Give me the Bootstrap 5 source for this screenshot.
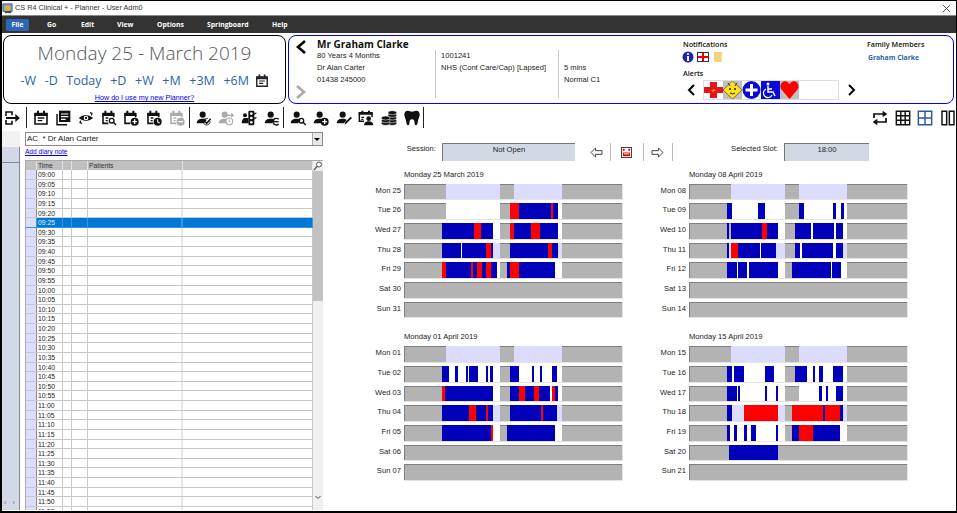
<!DOCTYPE html>
<html lang="en">
<head>
  <meta charset="UTF-8" />
  <title>CS R4 Clinical + - Planner - User Adm0</title>
  <link href="https://cdn.jsdelivr.net/npm/bootstrap@5.3.3/dist/css/bootstrap.min.css" rel="stylesheet">
  <style>
    html, body { height: 100%; overflow: hidden; background: #fff; }
    body { font-family: "Liberation Sans", "Noto Sans", sans-serif; font-size: 7.6px; line-height: 12px; color: #222; }
    .app-window { width: 957px; height: 513px; border: 1px solid #000; border-left-width: 2px; border-bottom-width: 2px; overflow: hidden; }
    .title-bar { height: 14px; font-size: 7.3px; color: #333; }
    .title-bar svg { width: 11px; height: 11px; margin: 0 2px 0 0; }
    .menu-bar { height: 18px; background: #333; border-top: 1px solid #888; color: #fff; font-family: "Open Sans", sans-serif; font-weight: 700; font-size: 6.8px; padding-left: 4px; }
    .menu-bar span { display: block; }
    .menu-file { width: 23px; height: 12px; line-height: 12px; background: #2f65b5; border-radius: 2px; text-align: center; margin-right: 18px; }
    .menu-bar .m-go { width: 34px; } .menu-bar .m-edit { width: 36px; } .menu-bar .m-view { width: 40px; }
    .menu-bar .m-options { width: 50px; } .menu-bar .m-spring { width: 65px; }
    .panels { height: 69px; margin: 2px 0 0 1px; gap: 2px; }
    .date-panel { width: 283px; border: 1px solid #000; border-radius: 8px; }
    .date-title { font-family: "Open Sans", sans-serif; font-weight: 300; font-size: 19px; line-height: 26px; color: #555; margin-top: 4px; }
    .date-nav { gap: 8.6px; margin-top: 5px; height: 20px; font-family: "Open Sans", sans-serif; font-size: 12.5px; line-height: 20px; color: #2d62ad; }
    .date-nav svg { width: 14px; height: 14px; margin-left: -3px; }
    .date-help { font-size: 7.2px; line-height: 11px; color: #0000e0; text-decoration: underline; margin-top: 1px; }
    .patient-panel { width: 666px; border: 1px solid #00f; border-radius: 8px; }
    .chev-col { width: 28px; padding: 3px 0 3px 5px; }
    .chev-col svg { width: 14px; height: 16px; }
    .p-main { width: 118px; padding-top: 2px; }
    .p-name { font-family: "Open Sans", sans-serif; font-size: 10px; line-height: 12px; font-weight: 700; color: #111; }
    .p-line { height: 12px; white-space: nowrap; }
    .p-col { margin-top: 14px; height: 48px; border-left: 1px solid #ccc; padding: 0 0 0 5px; }
    .p-col.c2 { width: 123px; } .p-col.c3 { width: 125px; }
    .p-head { font-family: "Open Sans", sans-serif; font-weight: 600; color: #111; font-size: 7.2px; }
    .notify { width: 184px; padding-top: 2px; }
    .notify-icons { gap: 3px; height: 13px; margin-left: -1px; }
    .notify-icons svg { width: 12px; height: 12px; }
    .alert-row { margin: 1px 0 0 3px; }
    .alert-row > svg { width: 10px; height: 14px; }
    .alert-box { width: 136px; height: 20px; border: 1px solid #ddd; margin: 0 8px 0 7px; padding: 0; }
    .alert-box svg { width: 19px; height: 18px; display: block; }
    .family { padding-top: 2px; }
    .family-link { color: #2d62ad; font-weight: 700; font-family: "Open Sans", sans-serif; font-size: 6.8px; margin: 2px 0 0 1px; }
    .toolbar { height: 27px; padding: 2px 0 2px 1px; }
    .tool { width: 16px; height: 16px; margin: 0 5.7px 0 1px; color: #111; flex: none; }
    .tool.off { color: #aaa; }
    .tool.on { color: #2d5a9a; }
    .tool-sep { width: 1px; height: 21px; background: #222; margin: 0 5px 0 -2px; flex: none; }
    .tool-sep.first { margin-left: 0; }
    .work { height: 379px; }
    .side-strip { width: 18px; background: #f2f2f2; }
    .side-strip .fill { background: #d3d9e4; margin-top: 16px; border-right: 1px solid #7f8a99; }
    .side-strip .fill-line { height: 16px; border-bottom: 1px solid #7f8a99; }
    .side-arrows { color: #666; font-size: 7px; line-height: 9px; padding: 0 4px 3px 2px; }
    .diary { width: 298px; margin-left: 5px; padding-top: 1px; }
    .combo { height: 14px; border: 1px solid #8a8a8a; font-size: 8px; line-height: 12px; padding-left: 1px; }
    .combo-btn { width: 10px; background: #e8e8e8; border-left: 1px solid #aaa; }
    .combo-btn::after { content: ""; border: 3px solid transparent; border-top-color: #000; border-bottom: 0; }
    .add-note { height: 14px; color: #0000e0; text-decoration: underline; font-size: 6.6px; line-height: 12px; }
    .slots { height: 350px; border: 1px solid #aaa; border-width: 1px 0 0 1px; overflow: hidden; }
    .slot-list { width: 287px; }
    .slot-row { display: grid; grid-template-columns: 11px 26px 9px 16px 95px 1fr; height: 9.63px; font-size: 6.8px; line-height: 9px; box-sizing: border-box; border-bottom: 1px solid #c8c8c8; }
    .slot-row > div { border-right: 1px solid #c8c8c8; padding-left: 1px; overflow: hidden; }
    .slot-row > div:first-child { background: #dcdcff; border-right-color: #888; }
    .slot-row > div:nth-child(5) { border-right: 2px solid #e8e8e8; }
    .slot-row.head { background: #c0c0c0; border-bottom: 0; color: #333; height: 9px; }
    .slot-row.head > div, .slot-row.head > div:first-child { background: #c0c0c0; border-right: 1px solid #e4e4e4; }
    .slot-row.sel, .slot-row.sel > div { background: #0078d7; color: #e8f2ff; border-color: #3c94de; }
    .slot-row.sel > div:first-child { background: #dcdcff; color: inherit; }
    .slot-scroll { width: 10px; background: #f0f0f0; }
    .slot-scroll .thumb { height: 130px; background: #c2c2c2; }
    .slot-scroll svg { width: 10px; height: 10px; }
    .planner { width: 620px; margin-left: 15px; }
    .session-row { height: 18px; margin-top: 12px; }
    .field-label { width: 104px; padding-right: 6px; text-align: right; height: 18px; line-height: 12px; }
    .field-label.slot { width: 111px; }
    .field-box { background: #d3d9e4; border-top: 1px solid #777; border-left: 1px solid #777; text-align: center; line-height: 11px; height: 18px; width: 133px; }
    .field-box.slot { width: 85px; }
    .nav-btn { height: 18px; border-right: 1px solid #bbb; width: 29px; }
    .nav-btn.back { width: 27px; margin-left: 9px; } .nav-btn.today { width: 33px; }
    .nav-btn svg { width: 13px; height: 11px; }
    .month-grid { display: grid; grid-template-columns: 285px 285px; row-gap: 11px; margin-top: 8.7px; }
    .month-title { height: 14px; padding-left: 66px; line-height: 10px; }
    .day-row { height: 19.67px; padding-bottom: 3px; }
    .day-label { width: 63px; margin-right: 3px; text-align: right; line-height: 14px; flex: none; }
    .day-bar { width: 219px; height: 16.67px; background: #b3b3b3; border: 1px solid #e4e4e4; border-width: 0 1px 1px 0; box-shadow: inset 1px 1px 0 #808080; overflow: hidden; flex: none; }
    .day-bar > i { display: block; height: 100%; flex: none; }
    .seg-g { background: transparent; } .seg-l { background: #dcdcff; } .seg-w { background: #fff; }
    .seg-b { background: #0000bb; } .seg-r { background: #f00; }
  </style>
</head>
<body>
  <svg width="0" height="0" class="position-absolute">
    <defs>
      <symbol id="cal" viewBox="0 0 24 24"><path d="M3 6h18v15H3z" fill="none" stroke="currentColor" stroke-width="2.4"/><path d="M2 4h20v5H2zM6 1h3v4H6zM15 1h3v4h-3z" fill="currentColor"/><path d="M7 12h10M7 16h7" stroke="currentColor" stroke-width="2" fill="none"/></symbol>
      <symbol id="cal-frame" viewBox="0 0 24 24"><path d="M11 20H3V6h16v5" fill="none" stroke="currentColor" stroke-width="2.4"/><path d="M2 4h18v5H2zM5 1h3v4H5zM14 1h3v4h-3z" fill="currentColor"/></symbol>
      <symbol id="user" viewBox="0 0 24 24"><circle cx="10" cy="7" r="4.6" fill="currentColor"/><path d="M1 20c0-5 4-7 9-7 3 0 5 .8 6 2l-4 5z" fill="currentColor"/></symbol>
    </defs>
  </svg>

  <div class="app-window d-flex flex-column">
    <div class="title-bar d-flex align-items-center">
      <svg viewBox="0 0 12 12"><rect x="1" y="1" width="10" height="8" fill="#8fa6bf" stroke="#456"/><circle cx="6" cy="6" r="3" fill="#e2b13c"/><rect x="3" y="9" width="7" height="2" fill="#345"/></svg>
      <span>CS R4 Clinical + - Planner - User Adm0</span>
      <svg class="ms-auto me-1" viewBox="0 0 12 12"><path d="M2 2l8 8M10 2l-8 8" stroke="#444" fill="none"/></svg>
    </div>
    <div class="menu-bar d-flex align-items-center">
      <span class="menu-file">File</span><span class="m-go">Go</span><span class="m-edit">Edit</span><span class="m-view">View</span><span class="m-options">Options</span><span class="m-spring">Springboard</span><span>Help</span>
    </div>

    <div class="panels d-flex">
      <div class="date-panel d-flex flex-column align-items-center">
        <div class="date-title">Monday 25 - March 2019</div>
        <div class="date-nav d-flex align-items-center">
          <span>-W</span><span>-D</span><span>Today</span><span>+D</span><span>+W</span><span>+M</span><span>+3M</span><span>+6M</span>
          <svg class="text-dark"><use href="#cal"/></svg>
        </div>
        <div class="date-help">How do I use my new Planner?</div>
      </div>
      <div class="patient-panel d-flex">
        <div class="chev-col d-flex flex-column justify-content-between">
          <svg viewBox="0 0 14 16"><path d="M11 2L4 8l7 6" fill="none" stroke="#000" stroke-width="2.6"/></svg>
          <svg viewBox="0 0 14 16"><path d="M3 2l7 6-7 6" fill="none" stroke="#aaa" stroke-width="2.6"/></svg>
        </div>
        <div class="p-main">
          <div class="p-name">Mr Graham Clarke</div>
          <div class="p-line">80 Years 4 Months</div>
          <div class="p-line">Dr Alan Carter</div>
          <div class="p-line">01438 245000</div>
        </div>
        <div class="p-col c2">
          <div class="p-line">1001241</div>
          <div class="p-line">NHS (Cont Care/Cap) [Lapsed]</div>
        </div>
        <div class="p-col c3">
          <div class="p-line">&nbsp;</div>
          <div class="p-line">5 mins</div>
          <div class="p-line">Normal C1</div>
        </div>
        <div class="notify">
          <div class="p-head">Notifications</div>
          <div class="notify-icons d-flex align-items-center">
            <svg viewBox="0 0 12 12"><circle cx="6" cy="6" r="5.5" fill="#2222aa"/><circle cx="6" cy="3" r="1.1" fill="#fff"/><path d="M5 5h2v5H5z" fill="#fff"/></svg>
            <svg viewBox="0 0 12 12"><rect x=".5" y="1.5" width="11" height="9" fill="#fff" stroke="#333"/><path d="M5 2h2v8H5zM1 5h10v2H1z" fill="#e00"/></svg>
            <svg viewBox="0 0 12 12"><path d="M2 1h8l-.5 8 .5 2H3L2 9z" fill="#f4d27a"/></svg>
          </div>
          <div class="p-head mt-1">Alerts</div>
          <div class="alert-row d-flex align-items-center">
            <svg viewBox="0 0 10 14"><path d="M8 2L3 7l5 5" fill="none" stroke="#000" stroke-width="2"/></svg>
            <div class="alert-box d-flex">
              <svg viewBox="0 0 19 18"><path d="M6 1h7v5h6v6h-6v5H6v-5H0V6h6z" fill="#e8141c"/><path d="M6 10l5-2-1 1.500 3-.5-5 2 1-1.500z" fill="#ffe600"/></svg>
              <svg viewBox="0 0 19 18"><rect width="19" height="18" fill="#c0c0c0"/><path d="M9.500 0L19 9l-9.500 9L0 9z" fill="#ffe21a" stroke="#333" stroke-width=".6"/><path d="M5 2l2 3M14 2l-2 3" stroke="#333"/><circle cx="7" cy="8" r="1" fill="#222"/><circle cx="12" cy="8" r="1" fill="#222"/><path d="M7 12q2.500 2 5 0" fill="none" stroke="#222"/></svg>
              <svg viewBox="0 0 19 18"><circle cx="9.500" cy="9" r="9" fill="#0a0ad8"/><path d="M8 3h3v4.500h4.500v3H11V15H8v-4.500H3.500v-3H8z" fill="#fff"/></svg>
              <svg viewBox="0 0 19 18"><rect width="19" height="18" fill="#0a0ad8"/><circle cx="7" cy="3" r="1.500" fill="#fff"/><path d="M7 5v6h5l2 4M7 8h4" fill="none" stroke="#fff" stroke-width="1.500"/><path d="M5 8a4.500 4.500 0 1 0 6 6" fill="none" stroke="#fff" stroke-width="1.200"/></svg>
              <svg viewBox="0 0 19 18"><rect width="19" height="18" fill="#c0c0c0"/><path d="M9.500 18L1 8C-1 3 3-.5 6.500.5c1.500.5 2.500 1.500 3 3 .5-1.500 1.500-2.500 3-3C16-.5 20 3 18 8z" fill="#f00"/></svg>
            </div>
            <svg viewBox="0 0 10 14"><path d="M2 2l5 5-5 5" fill="none" stroke="#000" stroke-width="2"/></svg>
          </div>
        </div>
        <div class="family">
          <div class="p-head">Family Members</div>
          <div class="family-link">Graham Clarke</div>
        </div>
      </div>
    </div>

    <div class="toolbar d-flex align-items-center">
      <svg class="tool" viewBox="0 0 24 24"><path d="M3 9V3h9v5M3 15v6h9v-5" fill="none" stroke="currentColor" stroke-width="2.4"/><path d="M3 10.500h14V6l7 6-7 6v-4.500H3z" fill="currentColor"/></svg>
      <span class="tool-sep first"></span>
      <svg class="tool"><use href="#cal"/></svg>
      <svg class="tool" viewBox="0 0 24 24"><path d="M3 6v16h15" fill="none" stroke="currentColor" stroke-width="2.200"/><path d="M6 1h17v17H6z" fill="currentColor"/><path d="M9 6h11M9 10h11M9 14h7" stroke="#fff" stroke-width="1.800"/></svg>
      <svg class="tool" viewBox="0 0 24 24"><path d="M1 12q10-9 22 0-11 9-22 0z" fill="currentColor"/><circle cx="12" cy="12" r="3.500" fill="#fff"/><circle cx="12" cy="12" r="1.700" fill="currentColor"/><path d="M18 4l3 1-1 3M6 20l-3-1 1-3" fill="none" stroke="currentColor" stroke-width="1.800"/></svg>
      <svg class="tool" viewBox="0 0 24 24"><use href="#cal-frame"/><path d="M7 12h4M7 16h3" stroke="currentColor" stroke-width="2"/><circle cx="16" cy="16" r="3.500" fill="none" stroke="currentColor" stroke-width="2"/><path d="M18.500 18.500l4 4" stroke="currentColor" stroke-width="2.200"/></svg>
      <svg class="tool" viewBox="0 0 24 24"><use href="#cal-frame"/><circle cx="17.500" cy="17.500" r="6" fill="currentColor"/><path d="M17.500 14v7M14 17.500h7" stroke="#fff" stroke-width="2"/></svg>
      <svg class="tool" viewBox="0 0 24 24"><use href="#cal-frame"/><path d="M7 12h4M7 16h3" stroke="currentColor" stroke-width="2"/><circle cx="17.500" cy="17.500" r="6" fill="currentColor"/><path d="M17.500 14v4l3 1.500" fill="none" stroke="#fff" stroke-width="1.600"/></svg>
      <svg class="tool off" viewBox="0 0 24 24"><use href="#cal-frame"/><path d="M7 12h4M7 16h3" stroke="currentColor" stroke-width="2"/><circle cx="17.500" cy="17.500" r="6" fill="currentColor"/><path d="M14 17.500h7" stroke="#fff" stroke-width="2"/></svg>
      <span class="tool-sep"></span>
      <svg class="tool" viewBox="0 0 24 24"><use href="#user"/><path d="M13 17l3 3 6-7" fill="none" stroke="currentColor" stroke-width="2.200"/><path d="M21 17a5 5 0 1 1-3-4" fill="none" stroke="currentColor" stroke-width="1.200"/></svg>
      <svg class="tool off" viewBox="0 0 24 24"><use href="#user"/><circle cx="17" cy="17" r="5" fill="#fff" stroke="currentColor" stroke-width="1.600"/><path d="M17 14v3l2 1.500" fill="none" stroke="currentColor" stroke-width="1.400"/><path d="M14 7h6V4l4 4-4 4V9h-6z" fill="currentColor"/></svg>
      <svg class="tool" viewBox="0 0 24 24"><rect x="11" y="1" width="9" height="22" rx="2" fill="currentColor"/><circle cx="15.500" cy="5.500" r="2" fill="#fff"/><circle cx="15.500" cy="12" r="2" fill="#fff"/><circle cx="15.500" cy="18.500" r="2" fill="#fff"/><path d="M20 4h4l-4 4zM20 11h4l-4 4z" fill="currentColor"/><circle cx="6" cy="8" r="3" fill="currentColor"/><path d="M1 20c0-5 2-8 5-8h5v8z" fill="currentColor"/></svg>
      <svg class="tool" viewBox="0 0 24 24"><use href="#user"/><path d="M22 14a5 5 0 1 0 0 7" fill="none" stroke="currentColor" stroke-width="2"/><path d="M14 17.500h8" stroke="currentColor" stroke-width="2"/></svg>
      <span class="tool-sep"></span>
      <svg class="tool" viewBox="0 0 24 24"><use href="#user"/><circle cx="17" cy="16" r="3.500" fill="none" stroke="currentColor" stroke-width="2"/><path d="M19.500 18.500l4 4" stroke="currentColor" stroke-width="2.200"/></svg>
      <svg class="tool" viewBox="0 0 24 24"><use href="#user"/><circle cx="17.500" cy="17.500" r="6" fill="currentColor"/><path d="M17.500 14v7M14 17.500h7" stroke="#fff" stroke-width="2"/></svg>
      <svg class="tool" viewBox="0 0 24 24"><use href="#user"/><path d="M13 22l1-4 8-8 2 2-8 8z" fill="currentColor"/></svg>
      <svg class="tool" viewBox="0 0 24 24"><path d="M9 17H2V5h19v6" fill="none" stroke="currentColor" stroke-width="2.200"/><path d="M1 3h21v4H1zM5 1h3v3H5zM15 1h3v3h-3z" fill="currentColor"/><path d="M5 11h4M5 14h3" stroke="currentColor" stroke-width="1.800"/><circle cx="16" cy="13" r="3.500" fill="currentColor"/><path d="M9 23c0-4 3-6 7-6s7 2 7 6z" fill="currentColor"/></svg>
      <svg class="tool" viewBox="0 0 24 24"><g fill="currentColor" stroke="#fff" stroke-width=".8"><ellipse cx="17" cy="20" rx="6.500" ry="3"/><ellipse cx="17" cy="16" rx="6.500" ry="3"/><ellipse cx="17" cy="12" rx="6.500" ry="3"/><ellipse cx="17" cy="8" rx="6.500" ry="3"/><ellipse cx="17" cy="4" rx="6.500" ry="3"/><ellipse cx="7" cy="20" rx="6.500" ry="3"/><ellipse cx="7" cy="16" rx="6.500" ry="3"/><ellipse cx="7" cy="12" rx="6.500" ry="3"/></g></svg>
      <svg class="tool" viewBox="0 0 24 24"><path d="M6 1c2 0 4 1.500 6 1.500S16 1 18 1c4 0 6 3 5.500 7-.5 3-2 5-2.500 8-.4 3-1 7-3 7s-2-3-2.500-6c-.3-2-1-3-3.500-3s-3 1-3.500 3C8 20 8 23 6 23s-2.600-4-3-7c-.5-3-2-5-2.500-8C0 4 2 1 6 1z" fill="currentColor"/></svg>
      <span class="tool-sep"></span>
      <div class="ms-auto d-flex align-items-center">
        <svg class="tool" viewBox="0 0 24 24"><path d="M3 12V6h15" fill="none" stroke="currentColor" stroke-width="2.600"/><path d="M16 1l7 5-7 5z" fill="currentColor"/><path d="M21 12v6H6" fill="none" stroke="currentColor" stroke-width="2.600"/><path d="M8 13l-7 5 7 5z" fill="currentColor"/></svg>
        <svg class="tool" viewBox="0 0 24 24"><path d="M2 2h20v20H2zM8.700 2v20M15.300 2v20M2 8.700h20M2 15.300h20" fill="none" stroke="currentColor" stroke-width="2.200"/></svg>
        <svg class="tool on" viewBox="0 0 24 24"><path d="M2 2h20v20H2zM12 2v20M2 12h20" fill="none" stroke="currentColor" stroke-width="2.200"/></svg>
        <svg class="tool me-0" viewBox="0 0 24 24"><path d="M3 2h7v20H3zM14 2h7v20h-7z" fill="none" stroke="currentColor" stroke-width="2.200"/></svg>
      </div>
    </div>

    <div class="work d-flex">
      <div class="side-strip d-flex flex-column">
        <div class="fill flex-grow-1 d-flex flex-column justify-content-between">
          <div class="fill-line"></div>
          <div class="side-arrows d-flex justify-content-between"><span>‹</span><span>›</span></div>
        </div>
      </div>
      <div class="diary d-flex flex-column">
        <div class="combo d-flex justify-content-between">
          <span>AC&nbsp; * Dr Alan Carter</span>
          <span class="combo-btn d-flex align-items-center justify-content-center"></span>
        </div>
        <div class="add-note">Add diary note</div>
        <div class="slots d-flex">
          <div class="slot-list" id="slotList"></div>
          <div class="slot-scroll d-flex flex-column justify-content-between">
            <div>
              <svg viewBox="0 0 10 10" class="d-block"><circle cx="6" cy="3.500" r="2.500" fill="#fff" stroke="#555"/><path d="M4 5.500L1 9" stroke="#555" stroke-width="1.300"/></svg>
              <div class="thumb"></div>
            </div>
            <svg viewBox="0 0 10 10" class="mb-2"><path d="M2.500 4L5 6.500 7.500 4" fill="none" stroke="#444"/></svg>
          </div>
        </div>
      </div>
      <div class="planner">
        <div class="session-row d-flex">
          <div class="field-label">Session:</div>
          <div class="field-box">Not Open</div>
          <div class="nav-btn back d-flex align-items-center justify-content-center">
            <svg viewBox="0 0 14 12"><path d="M1 6l5-5v3h7v4H6v3z" fill="#fff" stroke="#333"/></svg>
          </div>
          <div class="nav-btn today d-flex align-items-center justify-content-center">
            <svg viewBox="0 0 14 12"><rect x="1.500" y=".5" width="11" height="11" fill="#fff" stroke="#333"/><path d="M3 2h2v2H3zM9 2h2v2H9z" fill="#c00"/><path d="M3 6h8v4H3z" fill="#d00"/><path d="M4 7.500h6" stroke="#fff"/></svg>
          </div>
          <div class="nav-btn d-flex align-items-center justify-content-center">
            <svg viewBox="0 0 14 12"><path d="M13 6L8 1v3H1v4h7v3z" fill="#fff" stroke="#333"/></svg>
          </div>
          <div class="field-label slot">Selected Slot:</div>
          <div class="field-box slot">18:00</div>
        </div>
        <div class="month-grid" id="monthGrid"></div>
      </div>
    </div>
  </div>

  <script src="https://cdn.jsdelivr.net/npm/bootstrap@5.3.3/dist/js/bootstrap.bundle.min.js"></script>
  <script>
    // diary slots, 5 minute steps from 09:00
    const slotList = document.getElementById("slotList");
    let rows = '<div class="slot-row head"><div></div><div>Time</div><div></div><div></div><div>Patients</div><div></div></div>';
    for (let i = 0; i < 36; i++) {
      const mins = 540 + i * 5;
      const t = String(Math.floor(mins / 60)).padStart(2, "0") + ":" + String(mins % 60).padStart(2, "0");
      rows += `<div class="slot-row${t === "09:25" ? " sel" : ""}"><div></div><div>${t}</div><div></div><div></div><div></div><div></div></div>`;
    }
    slotList.innerHTML = rows;

    // each bar is a list of colour + end coordinate, measured along 655 units
    const MON_A = "g125 l290 g330 l475 g655", MON_B = "g125 l288 g330 l474 g655";
    const months = [
      { title: "Monday 25 March 2019", first: 25, bars: [MON_A,
        "g125 w290 g320 r345 b441 r447 b464 w475 g655",
        "g115 b212 r231 b269 w290 g320 r332 b381 r410 b464 w475 g655",
        "g115 b170 w174 b248 r263 b269 l290 g320 b434 r446 b464 l475 g655",
        "g115 r125 b203 r209 b221 r236 b248 r263 b281 w290 g311 b320 r345 b453 w475 g655"] },
      { title: "Monday 08 April 2019", first: 8, bars: [MON_B,
        "g115 b129 w207 b228 w288 g330 b345 w432 b441 w456 b465 w474 g655",
        "g115 b121 g126 b220 r235 b269 w288 g319 b368 w372 b436 w442 b464 w474 g655",
        "g115 b121 l126 r147 b214 w218 b262 l288 g319 b333 w339 b433 w441 b464 l474 g655",
        "g115 b143 w147 b174 w181 b269 w288 g310 b427 w430 b456 w474 g655"] },
      { title: "Monday 01 April 2019", first: 1, bars: [MON_A,
        "g115 b135 w155 b163 w186 b193 w197 b224 w248 b254 w260 b269 w290 g320 b347 w384 b392 w410 b416 w446 b461 w475 g655",
        "g115 r122 b269 w290 g320 b347 r365 b392 r407 b440 w446 r453 b464 w475 g655",
        "g115 b197 r218 b248 r254 b269 l290 g320 b411 r419 b461 l475 g655",
        "g115 b263 r269 w290 g311 b453 w475 g655"] },
      { title: "Monday 15 April 2019", first: 15, bars: [MON_B,
        "g115 b129 w135 b166 w228 b255 w288 g319 b354 w372 b378 w392 b402 w433 b464 w474 g655",
        "g115 b143 w147 b153 w228 b235 w262 b269 w288 g330 w392 b399 w411 b418 w442 b464 w474 g655",
        "g115 b129 l166 r269 l288 g310 r402 b410 r453 b464 l474 g655",
        "g115 b122 w135 b143 w167 b174 w186 b201 w262 b269 w288 g310 b330 r372 b453 w474 g655",
        "g121 b269 g655"] }
    ];
    const DAYS = ["Mon", "Tue", "Wed", "Thu", "Fri", "Sat", "Sun"];

    const barHtml = spec => {
      if (!spec) return "";
      let prev = 0;
      return spec.split(" ").map(tok => {
        const end = Number(tok.slice(1));
        const w = (end - prev) / 655 * 100;
        prev = end;
        return `<i class="seg-${tok[0]}" style="width:${w.toFixed(2)}%"></i>`;
      }).join("");
    };

    document.getElementById("monthGrid").innerHTML = months.map(m => {
      const days = DAYS.map((d, i) => {
        const n = String(m.first + i).padStart(2, "0");
        return `<div class="day-row d-flex"><div class="day-label">${d} ${n}</div><div class="day-bar d-flex">${barHtml(m.bars[i])}</div></div>`;
      }).join("");
      return `<div><div class="month-title">${m.title}</div>${days}</div>`;
    }).join("");
  </script>
</body>
</html>
